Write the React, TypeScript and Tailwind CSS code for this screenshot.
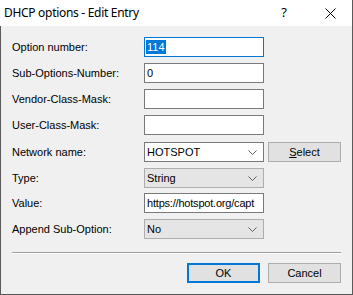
const font = { fontFamily: '"Liberation Sans", Arial, sans-serif' }

function Chevron() {
  return (
    <svg width="9" height="5" viewBox="0 0 9 5" className="shrink-0">
      <path d="M0.5 0.5 L4.5 4.5 L8.5 0.5" fill="none" stroke="#5f5f5f" strokeWidth="1" />
    </svg>
  )
}

function Row({ label, mt, children }: { label: string; mt: string; children: React.ReactNode }) {
  return (
    <div className={`flex items-center h-[20px] ${mt}`}>
      <div className="w-[132px] text-[11px] text-black leading-none">{label}</div>
      {children}
    </div>
  )
}

function TextBox({ value, focused }: { value?: string; focused?: boolean }) {
  return (
    <div
      className={`w-[120px] h-[20px] bg-white border flex items-center px-[1px] text-[11px] overflow-hidden whitespace-nowrap ${
        focused ? 'border-[#0078d7]' : 'border-[#7a7a7a]'
      }`}
    >
      {focused ? (
        <span className="bg-[#0078d7] text-white leading-[14px] px-[1px]">{value}</span>
      ) : (
        <span className="px-[1px] tracking-[-0.2px]">{value}</span>
      )}
    </div>
  )
}

function Combo({ value, grey }: { value: string; grey?: boolean }) {
  return (
    <div
      className={`w-[120px] h-[20px] border flex items-center justify-between pl-[2px] pr-[6px] text-[11px] ${
        grey ? 'bg-[#e5e5e5] border-[#adadad]' : 'bg-white border-[#7a7a7a]'
      }`}
    >
      <span>{value}</span>
      <Chevron />
    </div>
  )
}

export default function App() {
  return (
    <div className="w-[353px] h-[295px] bg-[#f0f0f0] flex flex-col text-black" style={font}>
      {/* Title bar */}
      <div className="h-[26px] bg-white flex items-center border-r border-[#5a5a5a] shrink-0">
        <div
          className="pl-[4px] text-[12px] tracking-[-0.3px] flex-1"
          style={{ fontFamily: '"Noto Sans", "Open Sans", sans-serif' }}
        >
          DHCP options - Edit Entry
        </div>
        <div className="w-[46px] text-center text-[13px] ml-[6px]" style={{ fontFamily: '"Noto Sans", sans-serif' }}>
          ?
        </div>
        <div className="w-[46px] flex justify-center mr-[-1px]">
          <svg width="11" height="11" viewBox="0 0 11 11">
            <path d="M0.5 0.5 L10.5 10.5 M10.5 0.5 L0.5 10.5" stroke="#000" strokeWidth="1" />
          </svg>
        </div>
      </div>

      {/* Body */}
      <div className="flex-1 flex flex-col px-[11px] border-l border-r border-b border-[#5a5a5a]">
        <Row label="Option number:" mt="mt-[11px]">
          <TextBox value="114" focused />
        </Row>
        <Row label="Sub-Options-Number:" mt="mt-[6px]">
          <TextBox value="0" />
        </Row>
        <Row label="Vendor-Class-Mask:" mt="mt-[6px]">
          <TextBox />
        </Row>
        <Row label="User-Class-Mask:" mt="mt-[6px]">
          <TextBox />
        </Row>
        <Row label="Network name:" mt="mt-[7px]">
          <Combo value="HOTSPOT" />
          <button className="ml-[4px] w-[73px] h-[20px] bg-[#e1e1e1] border border-[#adadad] text-[11px]">
            <span className="underline">S</span>elect
          </button>
        </Row>
        <Row label="Type:" mt="mt-[6px]">
          <Combo value="String" grey />
        </Row>
        <Row label="Value:" mt="mt-[5px]">
          <TextBox value="https://hotspot.org/capt" />
        </Row>
        <Row label="Append Sub-Option:" mt="mt-[6px]">
          <Combo value="No" grey />
        </Row>

        <div className="mt-[13px] h-[2px] border-t border-[#a0a0a0] border-b border-b-white w-[329px]" />

        <div className="mt-[9px] flex justify-end gap-[8px] w-[329px]">
          <button className="w-[73px] h-[20px] bg-[#e1e1e1] border-2 border-[#0078d7] text-[11px]">OK</button>
          <button className="w-[73px] h-[20px] bg-[#e1e1e1] border border-[#adadad] text-[11px]">Cancel</button>
        </div>
      </div>
    </div>
  )
}
